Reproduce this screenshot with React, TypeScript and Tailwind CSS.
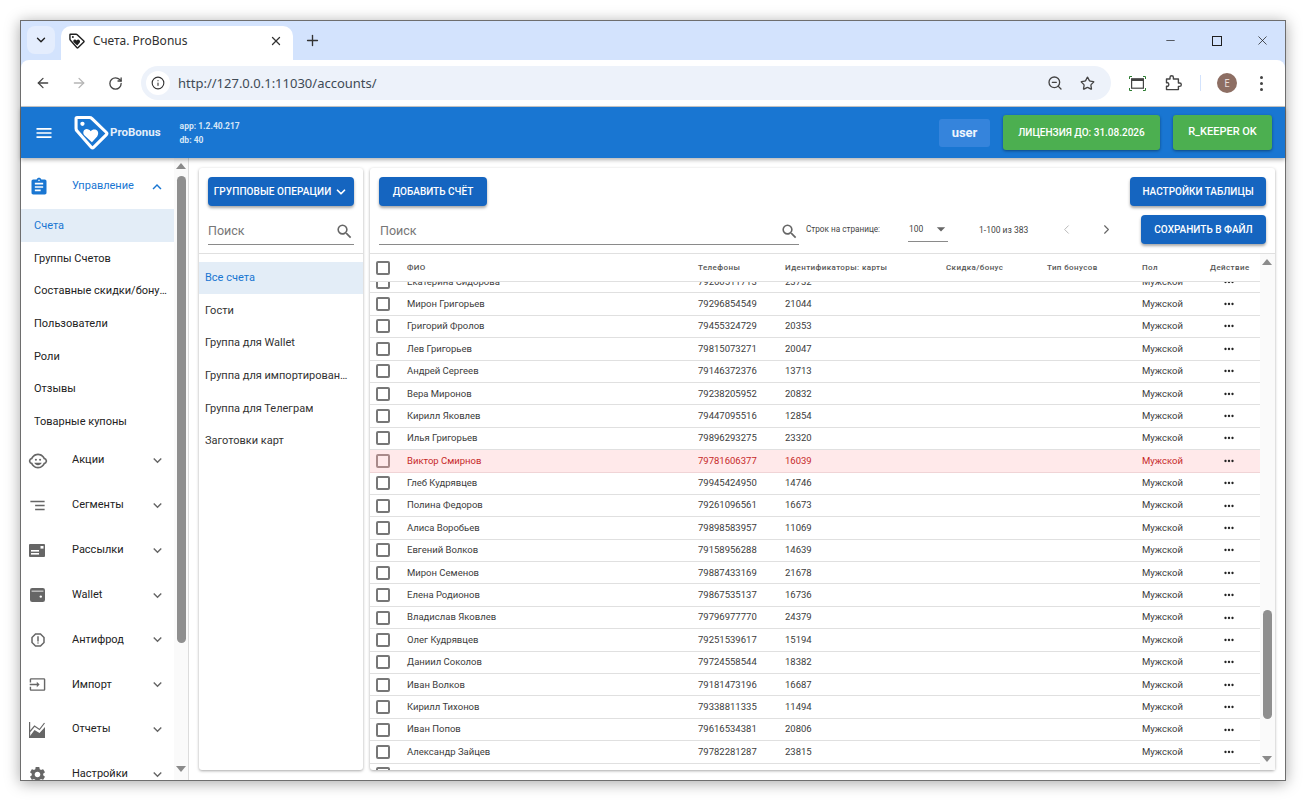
import React from "react";
import { ArrowLeft, ArrowRight, RotateCw, Info, ZoomOut, Star, ChevronDown, X, Plus, Minus, ChevronLeft, ChevronRight } from "lucide-react";
import { MdAssignment, MdSegment, MdOutlineChildCare, MdOutlineReport, MdInput, MdSettings, MdMoreHoriz, MdMenu, MdSearch, MdExpandMore, MdExpandLess, MdArrowDropDown } from "react-icons/md";

const roboto = "font-['Roboto',sans-serif]";

const rows = [
  ["Екатерина Сидорова", "79260511713", "23732"],
  ["Мирон Григорьев", "79296854549", "21044"],
  ["Григорий Фролов", "79455324729", "20353"],
  ["Лев Григорьев", "79815073271", "20047"],
  ["Андрей Сергеев", "79146372376", "13713"],
  ["Вера Миронов", "79238205952", "20832"],
  ["Кирилл Яковлев", "79447095516", "12854"],
  ["Илья Григорьев", "79896293275", "23320"],
  ["Виктор Смирнов", "79781606377", "16039"],
  ["Глеб Кудрявцев", "79945424950", "14746"],
  ["Полина Федоров", "79261096561", "16673"],
  ["Алиса Воробьев", "79898583957", "11069"],
  ["Евгений Волков", "79158956288", "14639"],
  ["Мирон Семенов", "79887433169", "21678"],
  ["Елена Родионов", "79867535137", "16736"],
  ["Владислав Яковлев", "79796977770", "24379"],
  ["Олег Кудрявцев", "79251539617", "15194"],
  ["Даниил Соколов", "79724558544", "18382"],
  ["Иван Волков", "79181473196", "16687"],
  ["Кирилл Тихонов", "79338811335", "11494"],
  ["Иван Попов", "79616534381", "20806"],
  ["Александр Зайцев", "79782281287", "23815"],
  ["", "", ""],
];

const gridCols = "grid grid-cols-[37px_291px_87px_161px_101px_95px_68px_50px] items-center";

function TagLogo({ color, size, sw = 2.6 }: { color: string; size: number; sw?: number }) {
  return (
    <svg width={size} height={size} viewBox="0 0 34 34" fill="none">
      <path d="M3 2.5 L15 2.5 Q16.5 2.5 17.5 3.5 L31.5 17 Q32.5 18 31.5 19 L19 31.5 Q18 32.5 17 31.5 L3 15.5 Q2 14.5 2 13 L2 3.5 Q2 2.5 3 2.5 Z" stroke={color} strokeWidth={sw} strokeLinejoin="round" />
      <circle cx="8.2" cy="8.6" r="2.1" fill={color} />
      <path d="M17.4 26.5 L10 19.6 C8 17.4 9.4 13.6 12.2 13.6 C14 13.6 15.3 14.5 16.2 15.8 C17.4 14.3 19.1 13.7 20.8 14.2 C23.5 15 24.4 18.4 22.5 20.8 Z" fill={color} />
    </svg>
  );
}

function Tb({ children, w }: { children: React.ReactNode; w: string }) {
  return (
    <button className={`${w} h-[29px] shrink-0 bg-[#1565c0] text-white rounded-[4px] text-[10px] font-medium shadow-[0_2px_3px_rgba(0,0,0,0.35)] flex items-center justify-center whitespace-nowrap ${roboto}`}>
      {children}
    </button>
  );
}

function MailIcon() {
  return (
    <svg width="16" height="13" viewBox="0 0 16 13">
      <rect width="16" height="13" rx="1" fill="#666" />
      <rect x="2" y="6" width="8" height="1.6" fill="#fff" />
      <rect x="2" y="9" width="8" height="1.6" fill="#fff" />
      <rect x="11.5" y="2" width="3" height="2.6" fill="#fff" />
    </svg>
  );
}

function WalletIcon() {
  return (
    <svg width="15" height="14" viewBox="0 0 15 14">
      <rect x="0" y="0" width="15" height="14" rx="2.2" fill="#666" />
      <rect x="1.6" y="2.6" width="11.8" height="1.1" fill="#ddd" />
      <circle cx="10.8" cy="8.6" r="1.2" fill="#fff" />
    </svg>
  );
}

function ChartIcon() {
  return (
    <svg width="16" height="16" viewBox="0 0 16 16" fill="none">
      <path d="M.6 0V16" stroke="#666" strokeWidth="1.2" />
      <path d="M1 9.5 L5.5 4 L10.5 7.5 L15.5 1" stroke="#666" strokeWidth="1.2" />
      <path d="M1 16 V14 L5.5 8 L10.5 11 L16 5 V16 Z" fill="#666" />
    </svg>
  );
}

const sections: [string, React.ReactNode][] = [
  ["Акции", <MdOutlineChildCare className="text-[#666] text-[20px] -ml-[1px]" />],
  ["Сегменты", <MdSegment className="text-[#666] text-[19px] -ml-[1px]" />],
  ["Рассылки", <MailIcon />],
  ["Wallet", <div className="pl-[1px]"><WalletIcon /></div>],
  ["Антифрод", <MdOutlineReport className="text-[#666] text-[18px]" />],
  ["Импорт", <MdInput className="text-[#666] text-[17px]" />],
  ["Отчеты", <ChartIcon />],
  ["Настройки", <MdSettings className="text-[#666] text-[19px] -ml-[1px]" />],
];

function VScrollTriangle({ up }: { up?: boolean }) {
  return (
    <svg width="10" height="6" viewBox="0 0 10 6" className="shrink-0">
      <path d={up ? "M5 0 L10 6 L0 6 Z" : "M0 0 L10 0 L5 6 Z"} fill="#8a8a8a" />
    </svg>
  );
}

export default function App() {
  return (
    <div className="w-[1308px] h-[800px] bg-white overflow-hidden pt-5 pl-5">
      <div className="w-[1266px] h-[761px] border border-[#6e6e6e] shadow-[0_2px_14px_rgba(0,0,0,0.35)] flex flex-col bg-white">
        {/* Tab strip */}
        <div className="h-[39px] shrink-0 bg-[#d3e3fd] flex items-start pl-[6px] pt-[5px] font-['Noto_Sans',sans-serif]">
          <div className="w-[28px] h-[28px] rounded-[8px] bg-[#e4edfd] flex items-center justify-center">
            <ChevronDown size={14} strokeWidth={2.4} className="text-[#1f1f1f]" />
          </div>
          <div className="ml-[6px] w-[232px] h-[34px] bg-white rounded-t-[10px] flex items-center pl-[8px] pr-[10px] pb-[4px]">
            <TagLogo color="#1f1f1f" size={16} sw={3} />
            <span className="ml-[8px] text-[12px] text-[#303030] leading-none">Счета. ProBonus</span>
            <X size={14} strokeWidth={2.2} className="ml-auto text-[#333]" />
          </div>
          <Plus size={17} strokeWidth={1.9} className="ml-[11px] mt-[6px] text-[#333]" />
          <div className="ml-auto flex items-center h-[29px] text-[#1f1f1f]">
            <Minus size={13} strokeWidth={1.3} className="mr-[35px]" />
            <div className="w-[10px] h-[10px] border border-[#1f1f1f] mr-[33px]" />
            <X size={15} strokeWidth={1.2} className="mr-[15px]" />
          </div>
        </div>
        {/* Toolbar */}
        <div className="h-[47px] shrink-0 bg-[#d3e3fd]">
          <div className="h-full bg-white rounded-t-[8px] border-b border-[#c8c8c8] flex items-center pl-[14px] pr-[14px] font-['Noto_Sans',sans-serif]">
            <ArrowLeft size={16} strokeWidth={1.9} className="text-[#444]" />
            <ArrowRight size={16} strokeWidth={1.9} className="ml-[20px] text-[#b5b5b5]" />
            <RotateCw size={15} strokeWidth={2.1} className="ml-[21px] text-[#444]" />
            <div className="ml-[18px] w-[970px] h-[34px] rounded-full bg-[#edf2fa] flex items-center pl-[5px] pr-[16px]">
              <div className="w-[24px] h-[24px] rounded-full bg-white flex items-center justify-center">
                <Info size={14} strokeWidth={1.9} className="text-[#333]" />
              </div>
              <span className="ml-[8px] text-[13px] text-[#404a55] leading-none">http://127.0.0.1:11030/accounts/</span>
              <ZoomOut size={16} strokeWidth={2} className="ml-auto text-[#444]" />
              <Star size={15} strokeWidth={2.1} className="ml-[17px] text-[#444]" />
            </div>
            <svg width="17" height="15" viewBox="0 0 17 15" fill="none" className="ml-[18px]">
              <rect x="2.6" y="2.8" width="11.8" height="9.4" stroke="#444" strokeWidth="1.2" />
              <rect x="2.6" y="2.8" width="11.8" height="2.2" fill="#444" />
              <path d="M.5 3V.5H3M14 .5h2.5V3M.5 12v2.5H3M14 14.5h2.5V12" stroke="#2e7d32" strokeWidth="1" />
            </svg>
            <svg width="18" height="16" viewBox="0 0 18 16" fill="none" className="ml-[19px]">
              <path d="M1.5 4H5V2.5a1.7 1.7 0 0 1 3.4 0V4h5v4h1.2a1.7 1.7 0 0 1 0 3.4h-1.2v3.2H1.5v-3.4H3a2.2 2.2 0 0 0 0-3.4H1.5Z" stroke="#444" strokeWidth="1.4" strokeLinejoin="round" />
            </svg>
            <div className="ml-[17px] w-[1px] h-[16px] bg-[#d3e3fd]" />
            <div className="ml-[16px] w-[20px] h-[20px] rounded-full bg-[#8d6e63] text-[#e8dcd8] text-[10px] flex items-center justify-center">E</div>
            <div className="ml-[23px] flex flex-col gap-[3px]">
              <div className="w-[3px] h-[3px] rounded-full bg-[#444]" />
              <div className="w-[3px] h-[3px] rounded-full bg-[#444]" />
              <div className="w-[3px] h-[3px] rounded-full bg-[#444]" />
            </div>
          </div>
        </div>
        {/* App header */}
        <div className={`h-[51px] shrink-0 bg-[#1976d2] flex items-center pl-[13px] pr-[13px] text-white ${roboto} shadow-[0_2px_4px_rgba(0,0,0,0.3)] z-10`}>
          <MdMenu className="text-[20px]" />
          <div className="ml-[20px]"><TagLogo color="#fff" size={35} sw={3} /></div>
          <span className="ml-[1px] text-[11.5px] font-bold text-[#e3eefa]">ProBonus</span>
          <div className="ml-[19px] flex flex-col gap-[5px] pt-[2px] text-[8.5px] font-bold text-[#d6e6f7] leading-[9px]">
            <span>app: 1.2.40.217</span>
            <span>db: 40</span>
          </div>
          <div className="ml-auto w-[51px] h-[28px] rounded-[3px] bg-[#3584dc] flex items-center justify-center text-[13px] font-bold text-[#eef5fd]">user</div>
          <div className="ml-[13px] w-[157px] h-[35px] rounded-[3px] bg-[#4caf50] shadow-[0_1px_3px_rgba(0,0,0,0.4)] flex items-center justify-center text-[10px] font-medium">ЛИЦЕНЗИЯ ДО: 31.08.2026</div>
          <div className="ml-[13px] w-[99px] h-[35px] rounded-[3px] bg-[#4caf50] shadow-[0_1px_3px_rgba(0,0,0,0.4)] flex items-center justify-center text-[11px] font-medium">R_KEEPER OK</div>
        </div>
        {/* Body */}
        <div className={`h-[622px] flex bg-white ${roboto}`}>
          {/* Sidebar */}
          <div className="w-[168px] shrink-0 flex border-r border-[#dcdcdc] overflow-hidden">
            <div className="w-[153px] shrink-0 pt-[5px]">
              <div className="h-[46px] flex items-center pl-[8px] pt-[1px] text-[#1976d2]">
                <MdAssignment className="text-[20px] text-[#1976d2]" />
                <span className="ml-[23px] text-[11px]">Управление</span>
                <MdExpandLess className="ml-auto mr-[8px] text-[18px]" />
              </div>
              <div className="h-[33px] pl-[13px] pt-[1px] flex items-center bg-[#e3edf7] text-[#1976d2] text-[11px]">Счета</div>
              {["Группы Счетов", "Составные скидки/бонусы", "Пользователи", "Роли", "Отзывы", "Товарные купоны"].map((t) => (
                <div key={t} className="h-[32.7px] pl-[13px] pr-[5px] pt-[1px] flex items-center text-[#222] text-[11px]">
                  <span className="truncate">{t}</span>
                </div>
              ))}
              {sections.map(([t, ic]) => (
                <div key={t} className="h-[44.85px] flex items-center text-[#222] text-[11px]">
                  <div className="w-[51px] shrink-0 pl-[8px] flex justify-start">{ic}</div>
                  <span>{t}</span>
                  <MdExpandMore className="ml-auto mr-[8px] text-[17px] text-[#666]" />
                </div>
              ))}
            </div>
            <div className="w-[14px] shrink-0 bg-[#fafafa] flex flex-col items-center pt-[5px]">
              <VScrollTriangle up />
              <div className="mt-[7px] w-[9px] h-[467px] rounded-full bg-[#8f8f8f]" />
              <div className="mt-auto mb-[8px]"><VScrollTriangle /></div>
            </div>
          </div>
          {/* Main */}
          <div className="flex-1 flex gap-[7px] pl-[10px] pr-[10px] pt-[10px] pb-[10px] min-w-0">
            {/* Groups */}
            <div className="w-[164px] shrink-0 bg-white rounded-[3px] shadow-[0_1px_3px_rgba(0,0,0,0.35)] flex flex-col">
              <div className="px-[9px] pt-[9px] pb-[9px] border-b border-[#e0e0e0] h-[86px]">
                <Tb w="w-[146px]">
                  <span className="tracking-[0.1px]">ГРУППОВЫЕ ОПЕРАЦИИ</span>
                  <ChevronDown size={14} strokeWidth={3} className="ml-[3px]" />
                </Tb>
                <div className="mt-[9px] h-[30px] pt-[4px] border-b border-[#8a8a8a] flex items-center">
                  <span className="text-[12.5px] text-[#777]">Поиск</span>
                  <MdSearch className="ml-auto text-[19px] text-[#666]" />
                </div>
              </div>
              <div className="pt-[8px]">
                <div className="h-[32px] pl-[6px] flex items-center bg-[#e3edf7] text-[#1976d2] text-[11px]">Все счета</div>
                {["Гости", "Группа для Wallet", "Группа для импортированных", "Группа для Телеграм", "Заготовки карт"].map((t) => (
                  <div key={t} className="h-[32.7px] pl-[6px] pr-[10px] pt-[1px] flex items-center text-[#333] text-[11px]">
                    <span className="truncate">{t}</span>
                  </div>
                ))}
              </div>
            </div>
            {/* Table card */}
            <div className="flex-1 min-w-0 bg-white rounded-[3px] shadow-[0_1px_3px_rgba(0,0,0,0.35)] flex flex-col">
              <div className="shrink-0 h-[86px] px-[9px] pt-[9px] border-b border-[#e0e0e0]">
                <div className="flex justify-between">
                  <Tb w="w-[108px]">ДОБАВИТЬ СЧЁТ</Tb>
                  <Tb w="w-[136px]">НАСТРОЙКИ ТАБЛИЦЫ</Tb>
                </div>
                <div className="mt-[9px] flex items-start h-[29px]">
                  <div className="w-[420px] h-[30px] pt-[4px] border-b border-[#8a8a8a] flex items-center">
                    <span className="text-[12.5px] text-[#777] pl-[1px]">Поиск</span>
                    <MdSearch className="ml-auto text-[19px] text-[#666]" />
                  </div>
                  <span className="ml-[7px] mt-[9px] text-[8.2px] text-[#444] leading-[10px] whitespace-nowrap w-[102px]">Строк на странице:</span>
                  <div className="w-[40px] h-[27px] pt-[2px] border-b border-[#8a8a8a] flex items-center text-[8.5px] text-[#444] pl-[1px]">
                    100
                    <MdArrowDropDown className="ml-auto text-[20px] -mr-[3px] text-[#666]" />
                  </div>
                  <span className="ml-[31px] mt-[10px] text-[8.5px] text-[#444] leading-[10px] whitespace-nowrap w-[48px]">1-100 из 383</span>
                  <ChevronLeft size={15} strokeWidth={1.6} className="ml-[32px] mt-[7px] text-[#bbb]" />
                  <ChevronRight size={15} strokeWidth={1.8} className="ml-[25px] mt-[7px] text-[#666]" />
                  <div className="ml-auto"><Tb w="w-[125px]">СОХРАНИТЬ В ФАЙЛ</Tb></div>
                </div>
              </div>
              <div className="flex-1 min-h-0 flex">
                <div className="w-[890px] shrink-0 flex flex-col min-h-0">
                  <div className={`${gridCols} h-[28px] shrink-0 border-b border-[#e0e0e0] text-[8px] font-medium text-[#555] tracking-[0.4px] relative z-10 bg-white`}>
                    <div className="pl-[6px]"><div className="w-[14px] h-[14px] border-2 border-[#777] rounded-[2px]" /></div>
                    <div>ФИО</div>
                    <div>Телефоны</div>
                    <div>Идентификаторы: карты</div>
                    <div>Скидка/бонус</div>
                    <div>Тип бонусов</div>
                    <div>Пол</div>
                    <div>Действие</div>
                  </div>
                  <div className="flex-1 min-h-0 overflow-hidden">
                    <div className="-mt-[11px]">
                      {rows.map((r, i) => {
                        const red = r[0] === "Виктор Смирнов";
                        return (
                          <div key={i} className={`${gridCols} h-[22.4px] border-b text-[9.5px] ${red ? "bg-[#ffe9ea] text-[#c62828] border-[#f0d4d6]" : "text-[#3c3c3c] border-[#e0e0e0]"}`}>
                            <div className="pl-[6px]"><div className={`w-[14px] h-[14px] border-2 rounded-[2px] ${red ? "border-[#a98a8a]" : "border-[#777]"}`} /></div>
                            <div>{r[0]}</div>
                            <div>{r[1]}</div>
                            <div>{r[2]}</div>
                            <div />
                            <div />
                            <div>Мужской</div>
                            <div className="pl-[12px]"><MdMoreHoriz className="text-[14px] text-[#222]" /></div>
                          </div>
                        );
                      })}
                    </div>
                  </div>
                </div>
                <div className="flex-1 bg-[#fafafa] flex flex-col items-center pt-[5px] pr-[1px]">
                  <VScrollTriangle up />
                  <div className="mt-[345px] w-[9px] h-[109px] rounded-full bg-[#8f8f8f]" />
                  <div className="mt-auto mb-[8px]"><VScrollTriangle /></div>
                </div>
              </div>
            </div>
          </div>
        </div>
      </div>
    </div>
  );
}
